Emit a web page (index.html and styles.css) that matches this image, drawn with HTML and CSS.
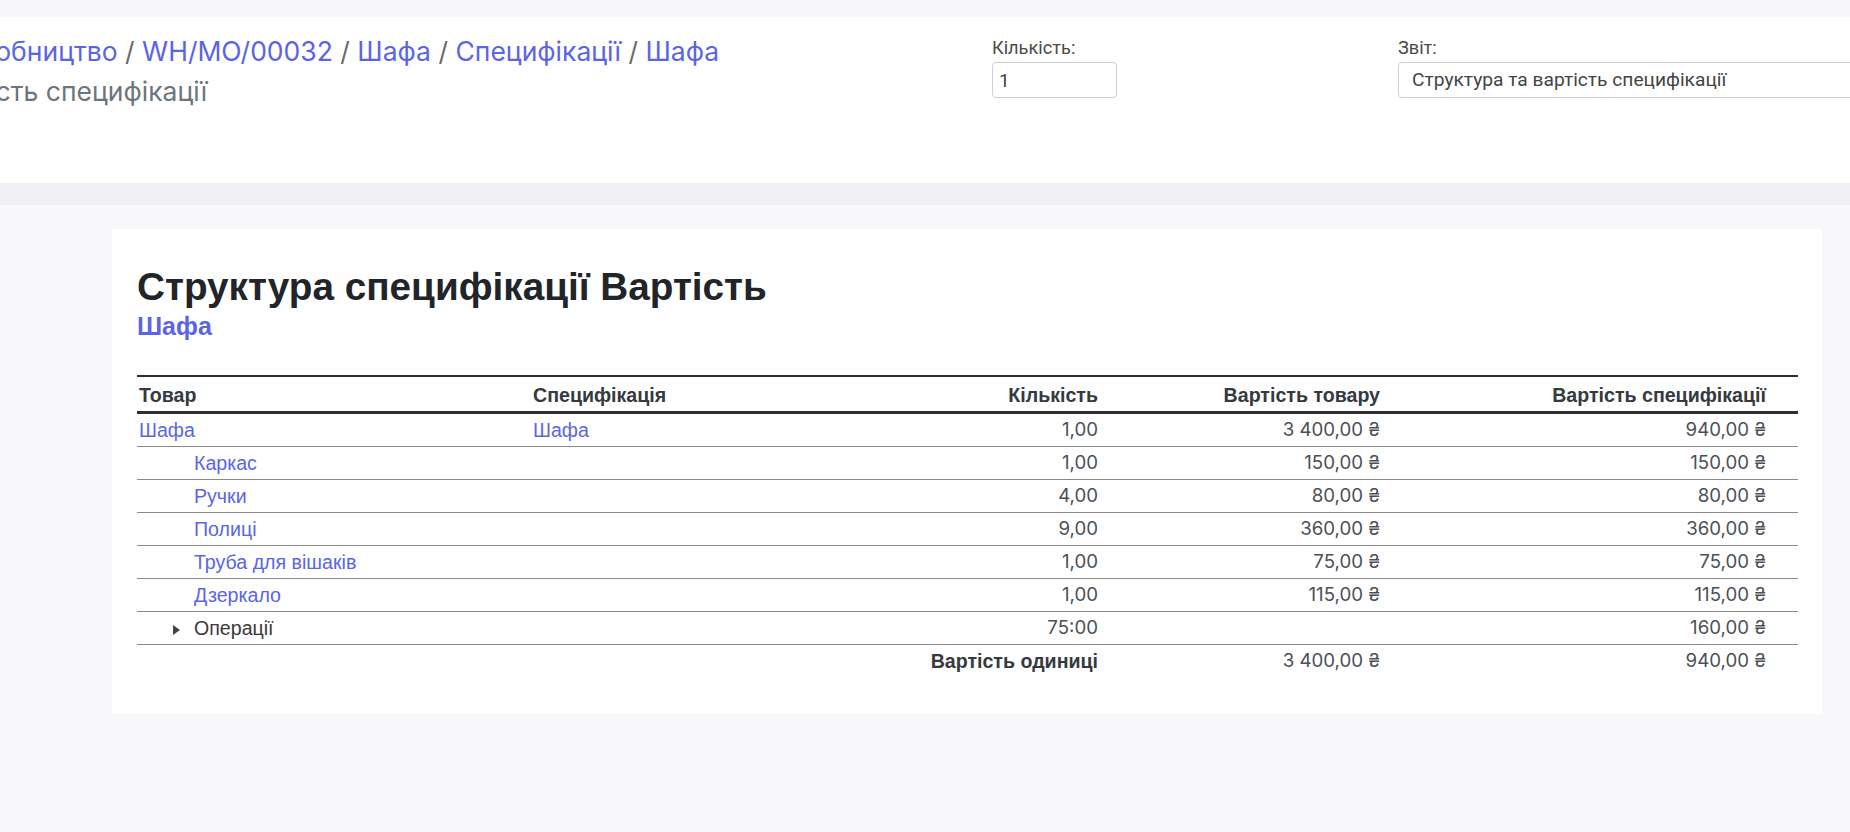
FILE: index.html
```html
<!DOCTYPE html>
<html lang="uk">
<head>
<meta charset="utf-8">
<title>Структура специфікації Вартість</title>
<link rel="stylesheet" href="styles.css">
</head>
<body>
<div class="topstrip"></div>
<header class="cp">
  <div class="crumbs">
    <div class="crumb-line"><a href="#">Виробництво</a> <span class="sep">/</span> <a href="#">WH/MO/00032</a> <span class="sep">/</span> <a href="#">Шафа</a> <span class="sep">/</span> <a href="#">Специфікації</a> <span class="sep">/</span> <a href="#">Шафа</a></div>
    <div class="crumb-current">Вартість специфікації</div>
  </div>
  <div class="field">
    <label class="field-label">Кількість:</label>
    <input class="qty-input" type="text" value="1">
  </div>
  <div class="field">
    <label class="field-label">Звіт:</label>
    <div class="report-select">Структура та вартість специфікації</div>
  </div>
</header>
<div class="band"></div>
<main class="content">
  <section class="card">
    <h2 class="title">Структура специфікації Вартість</h2>
    <a class="subtitle" href="#">Шафа</a>
    <table class="bom">
      <colgroup>
        <col class="c-product">
        <col class="c-bom">
        <col class="c-qty">
        <col class="c-prodcost">
        <col class="c-bomcost">
        <col class="c-extra">
      </colgroup>
      <thead>
        <tr>
          <th>Товар</th>
          <th>Специфікація</th>
          <th class="num">Кількість</th>
          <th class="num">Вартість товару</th>
          <th class="num">Вартість специфікації</th>
          <th></th>
        </tr>
      </thead>
      <tbody>
        <tr>
          <td><a href="#">Шафа</a></td>
          <td><a href="#">Шафа</a></td>
          <td class="num">1,00</td>
          <td class="num">3&nbsp;400,00 ₴</td>
          <td class="num">940,00 ₴</td>
          <td></td>
        </tr>
        <tr>
          <td class="child"><a href="#">Каркас</a></td>
          <td></td>
          <td class="num">1,00</td>
          <td class="num">150,00 ₴</td>
          <td class="num">150,00 ₴</td>
          <td></td>
        </tr>
        <tr>
          <td class="child"><a href="#">Ручки</a></td>
          <td></td>
          <td class="num">4,00</td>
          <td class="num">80,00 ₴</td>
          <td class="num">80,00 ₴</td>
          <td></td>
        </tr>
        <tr>
          <td class="child"><a href="#">Полиці</a></td>
          <td></td>
          <td class="num">9,00</td>
          <td class="num">360,00 ₴</td>
          <td class="num">360,00 ₴</td>
          <td></td>
        </tr>
        <tr>
          <td class="child"><a href="#">Труба для вішаків</a></td>
          <td></td>
          <td class="num">1,00</td>
          <td class="num">75,00 ₴</td>
          <td class="num">75,00 ₴</td>
          <td></td>
        </tr>
        <tr>
          <td class="child"><a href="#">Дзеркало</a></td>
          <td></td>
          <td class="num">1,00</td>
          <td class="num">115,00 ₴</td>
          <td class="num">115,00 ₴</td>
          <td></td>
        </tr>
        <tr>
          <td class="ops"><span class="caret"></span>Операції</td>
          <td></td>
          <td class="num">75:00</td>
          <td></td>
          <td class="num">160,00 ₴</td>
          <td></td>
        </tr>
      </tbody>
      <tfoot>
        <tr>
          <td colspan="3" class="total-label">Вартість одиниці</td>
          <td class="num">3&nbsp;400,00 ₴</td>
          <td class="num">940,00 ₴</td>
          <td></td>
        </tr>
      </tfoot>
    </table>
  </section>
</main>
</body>
</html>
```

FILE: styles.css
```css
* { box-sizing: border-box; }

html, body {
  margin: 0;
  padding: 0;
}

body {
  width: 1850px;
  height: 832px;
  overflow: hidden;
  background: #f8f8fb;
  font-family: Roboto, "Liberation Sans", Arial, sans-serif;
  color: #333;
}

a { text-decoration: none; color: #5a65e6; }

.topstrip {
  height: 17px;
  background: #f6f6f9;
}

.cp {
  height: 166px;
  background: #ffffff;
  display: grid;
  grid-template-columns: 1046px 406px 1fr;
  align-items: start;
  margin-left: -54px;
  padding-top: 16px;
  white-space: nowrap;
}

.crumbs {
  padding-top: 3px;
  font-family: Inter, Roboto, sans-serif;
  font-size: 26.5px;
  line-height: 30px;
}

.crumb-line .sep { color: #6b6b6b; }

.crumb-current {
  margin-top: 10px;
  margin-left: -18px;
  color: #6c757d;
}

.field {
  display: flex;
  flex-direction: column;
}

.field-label {
  font-size: 18.2px;
  line-height: 29px;
  color: #4a4a4a;
}

.qty-input {
  width: 125px;
  height: 36px;
  border: 1px solid #cfcfcf;
  border-radius: 4px;
  padding: 0 6px;
  font-family: Roboto, sans-serif;
  font-size: 19px;
  color: #444;
  background: #fff;
  outline: none;
}

.report-select {
  width: 520px;
  height: 36px;
  border: 1px solid #cfcfcf;
  border-radius: 4px;
  padding: 0 13px;
  font-size: 19.2px;
  line-height: 34px;
  color: #444;
  background: #fff;
}

.band {
  height: 22px;
  background: #f1f1f5;
}

.content {
  padding: 24px 28px 0 112px;
}

.card {
  background: #ffffff;
  padding: 36px 24px 37px 25px;
  font-family: "Liberation Sans", Arial, sans-serif;
  font-size: 19.6px;
}

.title {
  margin: 0;
  font-size: 38.7px;
  line-height: 43px;
  font-weight: 700;
  color: #212529;
}

.subtitle {
  display: block;
  margin-top: 6px;
  font-size: 25px;
  line-height: 25px;
  font-weight: 700;
}

.bom {
  width: 1661px;
  margin-top: 36px;
  border-collapse: collapse;
  table-layout: fixed;
  border-top: 2px solid #2f2f2f;
}

.c-product { width: 394px; }
.c-bom { width: 419px; }
.c-qty { width: 150px; }
.c-prodcost { width: 282px; }
.c-bomcost { width: 386px; }
.c-extra { width: 30px; }

.bom th {
  text-align: left;
  font-weight: 700;
  color: #343a40;
  padding: 4px 2px 2px;
  line-height: 28px;
  border-bottom: 3px solid #2f2f2f;
  white-space: nowrap;
}

.bom td {
  padding: 2px 2px;
  line-height: 28px;
  white-space: nowrap;
  color: #333;
}

.bom tbody td { border-bottom: 1px solid #8a8a8a; }

.bom .num { text-align: right; }

.bom td.num {
  font-family: Inter, "Liberation Sans", sans-serif;
  font-size: 18.67px;
  color: #4b5058;
}

.bom td.child { padding-left: 57px; }

.bom td.ops { padding-left: 36px; color: #3a3a3a; }

.caret {
  display: inline-block;
  width: 0;
  height: 0;
  border-top: 5.5px solid transparent;
  border-bottom: 5.5px solid transparent;
  border-left: 7px solid #444;
  margin-right: 14px;
  vertical-align: 0;
}

.bom td.total-label {
  text-align: right;
  font-weight: 700;
  color: #343a40;
}
```
